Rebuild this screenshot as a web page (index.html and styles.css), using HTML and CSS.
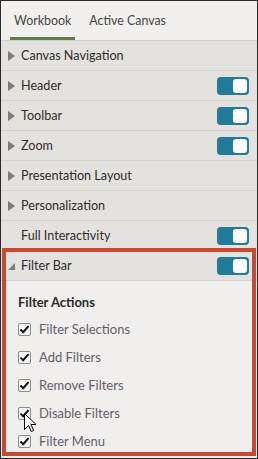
FILE: index.html
```html
<!DOCTYPE html>
<html>
<head>
<meta charset="utf-8">
<link rel="stylesheet" href="styles.css">
</head>
<body>
<div class="panel">
  <div class="tabs">
    <div class="tab active">Workbook</div>
    <div class="tab">Active Canvas</div>
  </div>
  <div class="row"><span class="caret"></span><span class="label">Canvas Navigation</span></div>
  <div class="row"><span class="caret"></span><span class="label">Header</span><span class="toggle"><span class="knob"></span></span></div>
  <div class="row"><span class="caret"></span><span class="label">Toolbar</span><span class="toggle"><span class="knob"></span></span></div>
  <div class="row"><span class="caret"></span><span class="label">Zoom</span><span class="toggle"><span class="knob"></span></span></div>
  <div class="row"><span class="caret"></span><span class="label">Presentation Layout</span></div>
  <div class="row"><span class="caret"></span><span class="label">Personalization</span></div>
  <div class="row"><span class="caret blank"></span><span class="label">Full Interactivity</span><span class="toggle"><span class="knob"></span></span></div>
  <div class="row"><span class="caret open"></span><span class="label">Filter Bar</span><span class="toggle"><span class="knob"></span></span></div>
  <div class="section">
    <div class="section-title">Filter Actions</div>
    <div class="check"><span class="box"><svg viewBox="0 0 13 13" width="13" height="13"><path d="M2.5 6.5 L5.2 9.2 L10.5 3.2" fill="none" stroke="#111" stroke-width="2"/></svg></span><span class="check-label">Filter Selections</span></div>
    <div class="check"><span class="box"><svg viewBox="0 0 13 13" width="13" height="13"><path d="M2.5 6.5 L5.2 9.2 L10.5 3.2" fill="none" stroke="#111" stroke-width="2"/></svg></span><span class="check-label">Add Filters</span></div>
    <div class="check"><span class="box"><svg viewBox="0 0 13 13" width="13" height="13"><path d="M2.5 6.5 L5.2 9.2 L10.5 3.2" fill="none" stroke="#111" stroke-width="2"/></svg></span><span class="check-label">Remove Filters</span></div>
    <div class="check"><span class="box"><svg viewBox="0 0 13 13" width="13" height="13"><path d="M2.5 6.5 L5.2 9.2 L10.5 3.2" fill="none" stroke="#111" stroke-width="2"/></svg></span><span class="check-label">Disable Filters</span></div>
    <div class="check"><span class="box"><svg viewBox="0 0 13 13" width="13" height="13"><path d="M2.5 6.5 L5.2 9.2 L10.5 3.2" fill="none" stroke="#111" stroke-width="2"/></svg></span><span class="check-label">Filter Menu</span></div>
  </div>
  <div class="highlight"></div>
  <svg class="cursor" viewBox="0 0 13 20" width="13" height="20"><path d="M0.5 0.5 L0.5 16.5 L4.5 12.5 L7.2 18.5 L9.6 17.5 L7 11.5 L12 11.5 Z" fill="#fff" stroke="#000" stroke-width="1" stroke-linejoin="miter"/></svg>
</div>
</body>
</html>
```
FILE: styles.css
```css
html, body {
  margin: 0;
  padding: 0;
}
body {
  font-family: Lato, "Open Sans", sans-serif;
  font-size: 13px;
  color: #333;
}
.panel {
  position: relative;
  width: 258px;
  height: 459px;
  box-sizing: border-box;
  border: 1px solid #2a2a2a;
  background: #f0efed;
  overflow: hidden;
}
.tabs {
  display: flex;
  gap: 10px;
  padding-left: 9px;
  height: 39px;
  background: #f1f0ee;
  border-bottom: 1px solid #d0cecb;
}
.tab {
  display: flex;
  align-items: center;
  padding: 2px 4px 0;
  box-sizing: border-box;
  height: 39px;
  border-bottom: 3px solid transparent;
  color: #454545;
  font-size: 12.4px;
}
.tab.active {
  border-bottom-color: #5f7b49;
}
.row {
  display: flex;
  align-items: center;
  height: 29px;
  border-bottom: 1px solid #d2d0cc;
  background: #e4e2df;
  padding: 0 8px 0 7px;
}
.caret {
  width: 0;
  height: 0;
  border-top: 5px solid transparent;
  border-bottom: 5px solid transparent;
  border-left: 7px solid #7c7c7c;
  margin-right: 6px;
}
.caret.blank {
  border-left-color: transparent;
}
.caret.open {
  border-top: 0;
  border-left: 7px solid transparent;
  border-bottom: 7px solid #7c7c7c;
  margin-top: 2px;
}
.label {
  flex: 1;
  color: #302c2e;
  font-size: 12.6px;
}
.toggle {
  position: relative;
  width: 32px;
  height: 18px;
  border-radius: 4px;
  background: #237b9b;
}
.knob {
  position: absolute;
  top: 2px;
  right: 2px;
  width: 14px;
  height: 14px;
  border-radius: 3px;
  background: #fbfbfa;
}
.section {
  padding: 13px 0 0 17px;
}
.section-title {
  font-weight: bold;
  line-height: 16px;
  color: #2a2a2a;
  margin-bottom: 5px;
}
.check {
  display: flex;
  align-items: center;
  height: 28px;
}
.box {
  width: 13px;
  height: 13px;
  box-sizing: border-box;
  border: 1px solid #8c8c8c;
  border-radius: 2px;
  background: #f7f7f6;
  margin-right: 8px;
  display: flex;
  align-items: center;
  justify-content: center;
}
.box svg {
  display: block;
  flex: none;
}
.check-label {
  color: #665d69;
}
.highlight {
  position: absolute;
  left: 1px;
  top: 247px;
  right: 1px;
  bottom: 2px;
  border: 4px solid #c84834;
  pointer-events: none;
}
.cursor {
  position: absolute;
  left: 23px;
  top: 412px;
}
```
